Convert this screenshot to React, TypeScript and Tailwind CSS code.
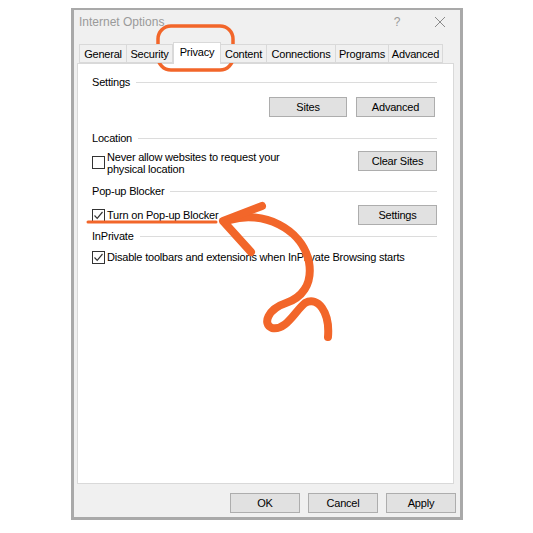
import { useState } from "react";

const font = { fontFamily: '"Liberation Sans", Arial, sans-serif' };

function GroupHeader({ label }: { label: string }) {
  return (
    <div className="flex items-center h-[14px] gap-[6px]">
      <span className="leading-[14px] text-black whitespace-nowrap">{label}</span>
      <div className="flex-1 h-px bg-[#dcdcdc]" />
    </div>
  );
}

function Btn({ label, w = "w-[78px]" }: { label: string; w?: string }) {
  return (
    <button className={`${w} h-[20px] shrink-0 bg-[#e1e1e1] border border-[#adadad] text-black leading-[18px] text-center`}>
      {label}
    </button>
  );
}

function Check({ checked }: { checked: boolean }) {
  return (
    <div className="w-[13px] h-[13px] shrink-0 border border-[#333] bg-white flex items-center justify-center">
      {checked && (
        <svg width="11" height="11" viewBox="0 0 11 11">
          <path d="M1.5 5.5 L4.2 8.3 L9.5 2" fill="none" stroke="#333" strokeWidth="1.2" />
        </svg>
      )}
    </div>
  );
}

const tabs = [
  { label: "General", w: "w-[48px]" },
  { label: "Security", w: "w-[47px]" },
  { label: "Privacy", w: "w-[48px]" },
  { label: "Content", w: "w-[47px]" },
  { label: "Connections", w: "w-[70px]" },
  { label: "Programs", w: "w-[54px]" },
  { label: "Advanced", w: "w-[55px]" },
];

export default function App() {
  const [active] = useState("Privacy");

  return (
    <div className="relative w-[533px] h-[533px] bg-white text-[11px] tracking-[-0.2px] overflow-hidden" style={font}>
      <div className="ml-[71px] mt-[8px] w-[392px] h-[512px] bg-[#f0f0f0] border-[3px] border-t-2 border-[#a9a9a9] flex flex-col">
        {/* title bar */}
        <div className="h-[23px] flex items-center pl-[5px] text-[#9a9a9a] text-[12px] tracking-normal">
          <span className="flex-1">Internet Options</span>
          <span className="w-[12px] text-center mr-[31px]">?</span>
          <svg width="12" height="12" viewBox="0 0 12 12" className="mr-[14px]">
            <path d="M1 1 L11 11 M11 1 L1 11" stroke="#8a8a8a" strokeWidth="1" />
          </svg>
        </div>

        {/* tabs */}
        <div className="mt-[9px] h-[21px] flex items-end pl-[5px] relative z-10">
          {tabs.map((t) =>
            t.label === active ? (
              <div
                key={t.label}
                className={`${t.w} h-[22px] bg-white border border-b-0 border-[#d9d9d9] text-black flex items-start justify-center pt-[2px] leading-[14px] -mb-px`}
              >
                {t.label}
              </div>
            ) : (
              <div
                key={t.label}
                className={`${t.w} h-[19px] bg-[#f0f0f0] border border-[#d9d9d9] -ml-px first:ml-0 text-black flex items-center justify-center leading-[14px]`}
              >
                {t.label}
              </div>
            )
          )}
        </div>

        {/* panel */}
        <div className="ml-[3px] w-[377px] h-[421px] bg-white border border-[#d9d9d9] pl-[14px] pr-[16px] pt-[11px] flex flex-col">
          <GroupHeader label="Settings" />
          <div className="mt-[8px] flex justify-end gap-[9px] pr-[2px]">
            <Btn label="Sites" />
            <Btn label="Advanced" w="w-[79px]" />
          </div>

          <div className="mt-[14px]">
            <GroupHeader label="Location" />
          </div>
          <div className="mt-[6px] flex items-start">
            <div className="mt-[5px]">
              <Check checked={false} />
            </div>
            <div className="ml-[2px] flex-1 leading-[12px] text-black">
              <div>Never allow websites to request your</div>
              <div>physical location</div>
            </div>
            <Btn label="Clear Sites" w="w-[79px]" />
          </div>

          <div className="mt-[9px]">
            <GroupHeader label="Pop-up Blocker" />
          </div>
          <div className="mt-[7px] flex items-center">
            <Check checked />
            <span className="ml-[2px] flex-1 leading-[14px] text-black">Turn on Pop-up Blocker</span>
            <Btn label="Settings" w="w-[79px]" />
          </div>

          <div className="mt-[4px]">
            <GroupHeader label="InPrivate" />
          </div>
          <div className="mt-[7px] flex items-center">
            <Check checked />
            <span className="ml-[2px] leading-[14px] text-black whitespace-nowrap">
              Disable toolbars and extensions when InPrivate Browsing starts
            </span>
          </div>
        </div>

        {/* footer */}
        <div className="mt-[9px] flex justify-end gap-[8px] pr-[4px]">
          <Btn label="OK" w="w-[70px]" />
          <Btn label="Cancel" w="w-[70px]" />
          <Btn label="Apply" w="w-[70px]" />
        </div>
      </div>

      {/* hand-drawn annotation overlay */}
      <svg className="absolute inset-0 pointer-events-none" width="533" height="533" viewBox="0 0 533 533">
        <rect x="158" y="26" width="75" height="44" rx="13" fill="none" stroke="#f2662a" strokeWidth="3.5" />
        <path d="M88 222 L216 222" stroke="#f2662a" strokeWidth="3" strokeLinecap="round" />
        <path
          d="M230 220 C262 210 302 228 309 262 C313 285 301 298 286 303 C268 309 262 324 272 328 C286 331 295 311 305 303 C318 296 330 312 328 337"
          fill="none"
          stroke="#f2662a"
          strokeWidth="8"
          strokeLinecap="round"
        />
        <path d="M262 206 L223 221 L251 252" fill="none" stroke="#f2662a" strokeWidth="8" strokeLinecap="round" strokeLinejoin="round" />
      </svg>
    </div>
  );
}
